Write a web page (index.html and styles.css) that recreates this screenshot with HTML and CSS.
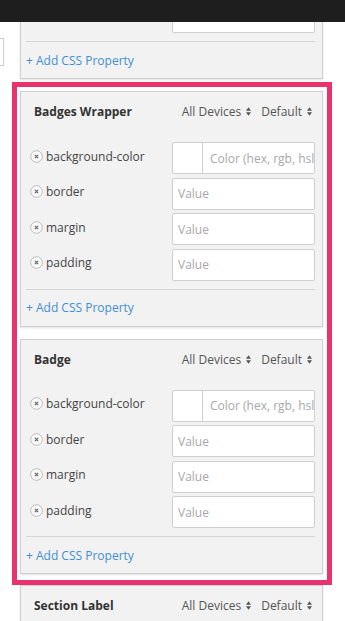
FILE: index.html
```html
<!DOCTYPE html>
<html lang="en">

<head>
    <meta charset="UTF-8">
    <meta name="viewport" content="width=device-width, initial-scale=1.0">
    <title>Style Editor</title>
    <link rel="stylesheet" href="styles.css">
</head>

<body>

    <!-- Top bar -->
    <div class="topbar"></div>

    <div class="page">
        <!-- Left column (mostly scrolled off) -->
        <div class="side">
            <div class="side-input"></div>
        </div>

        <div class="main">

            <!-- Previous panel, scrolled partly out of view -->
            <div class="panel panel-cut">
                <div class="rows">
                    <div class="row">
                        <span class="prop"></span>
                        <input class="value" type="text">
                    </div>
                </div>
                <div class="panel-foot"><a href="#" class="add-link">+ Add CSS Property</a></div>
            </div>

            <!-- Selected group -->
            <div class="selected">

                <div class="panel">
                    <div class="panel-head">
                        <span class="panel-title">Badges Wrapper</span>
                        <span class="picker">All Devices <svg class="updown" viewBox="0 0 6 10"><path d="M0 4L3 0L6 4Z M0 6L3 10L6 6Z"></path></svg></span>
                        <span class="picker">Default <svg class="updown" viewBox="0 0 6 10"><path d="M0 4L3 0L6 4Z M0 6L3 10L6 6Z"></path></svg></span>
                    </div>
                    <div class="rows">
                        <div class="row">
                            <span class="prop"><svg class="remove" viewBox="0 0 12 12"><circle cx="6" cy="6" r="5.4"></circle><path d="M4.5 4.5L7.5 7.5M7.5 4.5L4.5 7.5"></path></svg>background-color</span>
                            <div class="value color-value">
                                <span class="swatch"></span>
                                <input type="text" placeholder="Color (hex, rgb, hsl)">
                            </div>
                        </div>
                        <div class="row">
                            <span class="prop"><svg class="remove" viewBox="0 0 12 12"><circle cx="6" cy="6" r="5.4"></circle><path d="M4.5 4.5L7.5 7.5M7.5 4.5L4.5 7.5"></path></svg>border</span>
                            <input class="value" type="text" placeholder="Value">
                        </div>
                        <div class="row">
                            <span class="prop"><svg class="remove" viewBox="0 0 12 12"><circle cx="6" cy="6" r="5.4"></circle><path d="M4.5 4.5L7.5 7.5M7.5 4.5L4.5 7.5"></path></svg>margin</span>
                            <input class="value" type="text" placeholder="Value">
                        </div>
                        <div class="row">
                            <span class="prop"><svg class="remove" viewBox="0 0 12 12"><circle cx="6" cy="6" r="5.4"></circle><path d="M4.5 4.5L7.5 7.5M7.5 4.5L4.5 7.5"></path></svg>padding</span>
                            <input class="value" type="text" placeholder="Value">
                        </div>
                    </div>
                    <div class="panel-foot"><a href="#" class="add-link">+ Add CSS Property</a></div>
                </div>

                <div class="panel">
                    <div class="panel-head">
                        <span class="panel-title">Badge</span>
                        <span class="picker">All Devices <svg class="updown" viewBox="0 0 6 10"><path d="M0 4L3 0L6 4Z M0 6L3 10L6 6Z"></path></svg></span>
                        <span class="picker">Default <svg class="updown" viewBox="0 0 6 10"><path d="M0 4L3 0L6 4Z M0 6L3 10L6 6Z"></path></svg></span>
                    </div>
                    <div class="rows">
                        <div class="row">
                            <span class="prop"><svg class="remove" viewBox="0 0 12 12"><circle cx="6" cy="6" r="5.4"></circle><path d="M4.5 4.5L7.5 7.5M7.5 4.5L4.5 7.5"></path></svg>background-color</span>
                            <div class="value color-value">
                                <span class="swatch"></span>
                                <input type="text" placeholder="Color (hex, rgb, hsl)">
                            </div>
                        </div>
                        <div class="row">
                            <span class="prop"><svg class="remove" viewBox="0 0 12 12"><circle cx="6" cy="6" r="5.4"></circle><path d="M4.5 4.5L7.5 7.5M7.5 4.5L4.5 7.5"></path></svg>border</span>
                            <input class="value" type="text" placeholder="Value">
                        </div>
                        <div class="row">
                            <span class="prop"><svg class="remove" viewBox="0 0 12 12"><circle cx="6" cy="6" r="5.4"></circle><path d="M4.5 4.5L7.5 7.5M7.5 4.5L4.5 7.5"></path></svg>margin</span>
                            <input class="value" type="text" placeholder="Value">
                        </div>
                        <div class="row">
                            <span class="prop"><svg class="remove" viewBox="0 0 12 12"><circle cx="6" cy="6" r="5.4"></circle><path d="M4.5 4.5L7.5 7.5M7.5 4.5L4.5 7.5"></path></svg>padding</span>
                            <input class="value" type="text" placeholder="Value">
                        </div>
                    </div>
                    <div class="panel-foot"><a href="#" class="add-link">+ Add CSS Property</a></div>
                </div>

            </div>

            <!-- Next panel -->
            <div class="panel">
                <div class="panel-head">
                    <span class="panel-title">Section Label</span>
                    <span class="picker">All Devices <svg class="updown" viewBox="0 0 6 10"><path d="M0 4L3 0L6 4Z M0 6L3 10L6 6Z"></path></svg></span>
                    <span class="picker">Default <svg class="updown" viewBox="0 0 6 10"><path d="M0 4L3 0L6 4Z M0 6L3 10L6 6Z"></path></svg></span>
                </div>
            </div>

        </div>
    </div>

</body>

</html>
```

FILE: styles.css
```css
body {
    margin: 0;
    padding: 0;
    background-color: white;
    font-family: "Open Sans", sans-serif;
    color: #444;
    height: 621px;
    overflow: hidden;
}

.topbar {
    height: 22px;
    background-color: #1e1e1e;
}

.page {
    display: flex;
    height: 599px;
    overflow: hidden;
}

/* Left column, only its edge shows */
.side {
    width: 12px;
    flex-shrink: 0;
}

.side-input {
    width: 3px;
    height: 26px;
    margin-top: 16px;
    background-color: white;
    border: 1px solid #ccc;
    border-left: none;
}

.main {
    width: 320px;
    display: flex;
    flex-direction: column;
}

/* Panel */
.panel {
    width: 303px;
    box-sizing: border-box;
    margin-left: 8px;
    background-color: #f2f2f2;
    border: 1px solid #d0d0d0;
    box-shadow: 0 1px 2px rgba(0, 0, 0, 0.12);
}

.panel-cut {
    margin-top: -22px;
    flex-shrink: 0;
}

.panel-head {
    display: flex;
    align-items: center;
    height: 39px;
    padding: 0 10px 0 13px;
}

.panel-title {
    flex: 1;
    font-size: 12px;
    font-weight: 700;
    color: #333;
}

.picker {
    display: flex;
    align-items: center;
    font-size: 12px;
    color: #555;
    margin-left: 10px;
}

.updown {
    width: 5px;
    height: 9px;
    margin-left: 5px;
    flex-shrink: 0;
    fill: #555;
}

/* Property rows */
.rows {
    display: flex;
    flex-direction: column;
    gap: 3.5px;
    padding: 11px 7px 0 9px;
}

.panel-cut .rows {
    padding-top: 0;
}

.row {
    display: flex;
    align-items: center;
    justify-content: space-between;
}

.prop {
    display: flex;
    align-items: center;
    font-size: 12px;
    color: #444;
    margin-top: -4px;
}

.remove {
    width: 13px;
    height: 13px;
    flex-shrink: 0;
    margin-right: 3px;
}

.remove circle {
    fill: #f9f9f9;
    stroke: #b4b4b4;
    stroke-width: 0.8;
}

.remove path {
    stroke: #666;
    stroke-width: 1.1;
}

.value {
    width: 143px;
    height: 32px;
    box-sizing: border-box;
    padding: 0 5px;
    border: 1px solid #cfcfcf;
    border-radius: 2px;
    background-color: white;
    font-family: "Open Sans", sans-serif;
    font-size: 12px;
    color: #333;
}

.value::placeholder {
    color: #a8a8a8;
}

.color-value {
    display: flex;
    padding: 0;
    overflow: hidden;
}

.swatch {
    width: 29px;
    flex-shrink: 0;
    border-right: 1px solid #cfcfcf;
}

.color-value input {
    flex: 1;
    min-width: 0;
    border: none;
    padding: 0 0 0 7px;
    font-family: "Open Sans", sans-serif;
    font-size: 12px;
}

.color-value input::placeholder {
    color: #a8a8a8;
}

.panel-foot {
    margin: 8px 7px 0 5px;
    border-top: 1px solid #d6d6d6;
    height: 36px;
    display: flex;
    align-items: center;
}

.add-link {
    font-size: 12px;
    color: #3f8fd2;
    text-decoration: none;
}

/* Highlighted group */
.selected {
    margin-top: 3px;
    border: 5px solid #e9336c;
    padding: 4px 4px 6px 3px;
    display: flex;
    flex-direction: column;
    gap: 12px;
    flex-shrink: 0;
}

.selected .panel {
    margin-left: 0;
}
```
